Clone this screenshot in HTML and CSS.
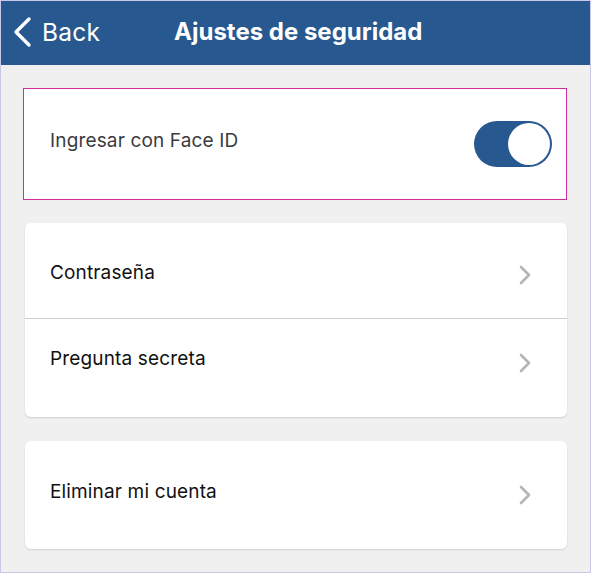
FILE: index.html
```html
<!DOCTYPE html>
<html lang="es">
<head>
<meta charset="utf-8">
<title>Ajustes de seguridad</title>
<link rel="stylesheet" href="styles.css">
</head>
<body>
<div class="frame">
  <header class="topbar">
    <div class="back">
      <svg class="back-icon" width="22" height="32" viewBox="0 0 22 32"><polyline points="17,3 4,16 17,29" fill="none" stroke="#fff" stroke-width="3.4" stroke-linecap="round" stroke-linejoin="round"/></svg>
      <span class="back-label">Back</span>
    </div>
    <h1 class="title">Ajustes de seguridad</h1>
  </header>
  <main class="content">
    <section class="card card-face">
      <span class="label label-face">Ingresar con Face ID</span>
      <div class="toggle"><div class="knob"></div></div>
    </section>
    <section class="card card-list">
      <div class="row row-first">
        <span class="label">Contraseña</span>
        <svg class="chev" width="14" height="20" viewBox="0 0 14 20"><polyline points="3,2 11,10 3,18" fill="none" stroke="#b5b5b5" stroke-width="2.6" stroke-linecap="round" stroke-linejoin="round"/></svg>
      </div>
      <div class="row row-second">
        <span class="label">Pregunta secreta</span>
        <svg class="chev" width="14" height="20" viewBox="0 0 14 20"><polyline points="3,2 11,10 3,18" fill="none" stroke="#b5b5b5" stroke-width="2.6" stroke-linecap="round" stroke-linejoin="round"/></svg>
      </div>
    </section>
    <section class="card card-single">
      <div class="row row-delete">
        <span class="label">Eliminar mi cuenta</span>
        <svg class="chev" width="14" height="20" viewBox="0 0 14 20"><polyline points="3,2 11,10 3,18" fill="none" stroke="#b5b5b5" stroke-width="2.6" stroke-linecap="round" stroke-linejoin="round"/></svg>
      </div>
    </section>
  </main>
</div>
</body>
</html>
```
FILE: styles.css
```css
* { box-sizing: border-box; }
html, body { margin: 0; padding: 0; }
body {
  font-family: Inter, "Noto Sans", sans-serif;
  background: #fff;
}
.frame {
  width: 591px;
  height: 573px;
  border: 1px solid #c8c8ea;
  background: #f0f0f0;
  overflow: hidden;
}
.topbar {
  height: 64px;
  background: #27588f;
  display: flex;
  align-items: center;
  color: #fff;
}
.back {
  display: flex;
  align-items: center;
  padding-left: 11px;
  gap: 8px;
  margin-top: -2px;
}
.back-label {
  font-size: 24.5px;
  font-weight: 400;
  letter-spacing: 0.2px;
}
.title {
  margin: -3px 0 0 74px;
  font-size: 24px;
  font-weight: 700;
}
.content {
  padding: 23px 23px 0 22px;
  display: flex;
  flex-direction: column;
}
.card {
  background: #fff;
  border-radius: 6px;
  box-shadow: 0 1px 2px rgba(0,0,0,0.14);
}
.card-face {
  height: 112px;
  border: 1.5px solid #d42aa0;
  border-radius: 0;
  box-shadow: none;
  display: flex;
  align-items: center;
  justify-content: space-between;
  padding: 0 14px 0 26px;
}
.label {
  font-size: 19px;
  color: #111;
  letter-spacing: 0.15px;
}
.label-face {
  color: #3b3b40;
  margin-top: -7px;
}
.toggle {
  width: 78px;
  height: 46px;
  border-radius: 23px;
  background: #27588f;
  display: flex;
  justify-content: flex-end;
  align-items: center;
  padding-right: 2px;
}
.knob {
  width: 42px;
  height: 42px;
  border-radius: 50%;
  background: #fff;
}
.card-list {
  margin: 23px 0 0 2px;
  height: 194px;
}
.card-single {
  margin: 24px 0 0 2px;
  height: 108px;
}
.row {
  display: flex;
  align-items: center;
  justify-content: space-between;
  padding: 0 35px 0 25px;
}
.row-first {
  height: 96px;
  border-bottom: 1px solid #cfcfcf;
}
.row-first .label { margin-top: 3px; }
.row-second {
  height: 78px;
}
.row-delete {
  height: 108px;
}
.row-delete .label { margin-top: -8px; }
.chev { margin-top: 8px; }
.row-second .chev { margin-top: 10px; }
.row-delete .chev { margin-top: 0; }
```
